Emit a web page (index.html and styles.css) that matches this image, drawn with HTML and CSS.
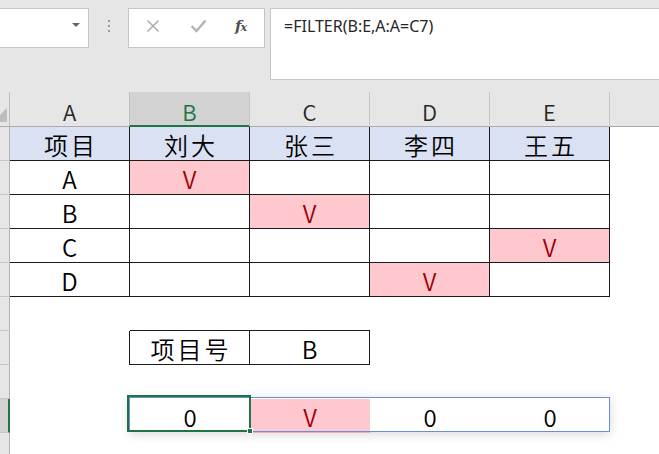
FILE: index.html
```html
<!DOCTYPE html>
<html>
<head>
<meta charset="utf-8">
<link rel="stylesheet" href="styles.css">
</head>
<body>
<div class="app">
  <div class="topbar">
    <div class="namebox"><span class="caret"></span></div>
    <div class="grip"><i></i><i></i><i></i></div>
    <div class="fxbtns">
      <svg class="ico-x" width="14" height="14" viewBox="0 0 14 14"><path d="M1.5 1.5 L12.5 12.5 M12.5 1.5 L1.5 12.5" stroke="#a6a6a6" stroke-width="1.4" fill="none"/></svg>
      <svg class="ico-ok" width="17" height="14" viewBox="0 0 17 14"><path d="M1.5 7 L6.5 12 L15.5 1.5" stroke="#b3b3b3" stroke-width="2.4" fill="none"/></svg>
      <span class="fx">f<span class="fx-x">x</span></span>
    </div>
    <div class="formula">=FILTER(B:E,A:A=C7)</div>
  </div>
  <div class="sheet">
    <!-- header row -->
    <div class="corner"><span class="tri"></span></div>
    <div class="ch">A</div>
    <div class="ch sel">B</div>
    <div class="ch">C</div>
    <div class="ch">D</div>
    <div class="ch">E</div>
    <div class="ch last"></div>
    <!-- row 1 -->
    <div class="rh"></div>
    <div class="c hd zh br bb">项目</div>
    <div class="c hd zh br bb">刘大</div>
    <div class="c hd zh br bb">张三</div>
    <div class="c hd zh br bb">李四</div>
    <div class="c hd zh br bb">王五</div>
    <div class="c"></div>
    <!-- row 2 -->
    <div class="rh"></div>
    <div class="c br bb">A</div>
    <div class="c br bb bad">V</div>
    <div class="c br bb"></div>
    <div class="c br bb"></div>
    <div class="c br bb"></div>
    <div class="c"></div>
    <!-- row 3 -->
    <div class="rh"></div>
    <div class="c br bb">B</div>
    <div class="c br bb"></div>
    <div class="c br bb bad">V</div>
    <div class="c br bb"></div>
    <div class="c br bb"></div>
    <div class="c"></div>
    <!-- row 4 -->
    <div class="rh"></div>
    <div class="c br bb">C</div>
    <div class="c br bb"></div>
    <div class="c br bb"></div>
    <div class="c br bb"></div>
    <div class="c br bb bad">V</div>
    <div class="c"></div>
    <!-- row 5 -->
    <div class="rh"></div>
    <div class="c br bb">D</div>
    <div class="c br bb"></div>
    <div class="c br bb"></div>
    <div class="c br bb bad">V</div>
    <div class="c br bb"></div>
    <div class="c"></div>
    <!-- row 6 -->
    <div class="rh"></div>
    <div class="c"></div>
    <div class="c bb"></div>
    <div class="c bb"></div>
    <div class="c"></div>
    <div class="c"></div>
    <div class="c"></div>
    <!-- row 7 -->
    <div class="rh"></div>
    <div class="c br"></div>
    <div class="c zh br bb">项目号</div>
    <div class="c br bb">B</div>
    <div class="c"></div>
    <div class="c"></div>
    <div class="c"></div>
    <!-- row 8 -->
    <div class="rh"></div>
    <div class="c"></div>
    <div class="c"></div>
    <div class="c"></div>
    <div class="c"></div>
    <div class="c"></div>
    <div class="c"></div>
    <!-- row 9 -->
    <div class="rh sel"></div>
    <div class="c"></div>
    <div class="c">0</div>
    <div class="c bad">V</div>
    <div class="c">0</div>
    <div class="c">0</div>
    <div class="c"></div>
    <!-- row 10 -->
    <div class="rh"></div>
    <div class="c"></div>
    <div class="c"></div>
    <div class="c"></div>
    <div class="c"></div>
    <div class="c"></div>
    <div class="c"></div>

    <div class="spill"></div>
    <div class="selbox"><span class="handle"></span></div>
  </div>
</div>
</body>
</html>
```

FILE: styles.css
```css
* { box-sizing: border-box; }
html, body { margin: 0; padding: 0; }
body {
  width: 659px;
  height: 454px;
  overflow: hidden;
  background: #ffffff;
  font-family: "Noto Sans CJK SC", "Noto Sans", sans-serif;
  color: #000;
}
.app { width: 659px; height: 454px; overflow: hidden; }

/* ---------- formula bar ---------- */
.topbar {
  height: 92px;
  background: #e6e6e6;
  display: flex;
  align-items: flex-start;
  padding-top: 8px;
}
.namebox {
  width: 89px;
  height: 40px;
  background: #fff;
  border: 1px solid #c6c6c6;
  border-left: none;
  position: relative;
  display: flex;
  align-items: center;
  justify-content: flex-end;
  padding-right: 8px;
}
.caret {
  width: 0; height: 0;
  border-left: 4px solid transparent;
  border-right: 4px solid transparent;
  border-top: 4px solid #666;
  margin-top: -6px;
}
.grip {
  width: 39px;
  height: 40px;
  display: flex;
  flex-direction: column;
  align-items: center;
  justify-content: center;
  gap: 3px;
  padding-bottom: 4px;
}
.grip i { display: block; width: 2px; height: 2px; background: #9a9a9a; }
.fxbtns {
  width: 137px;
  height: 40px;
  background: #fff;
  border: 1px solid #c6c6c6;
  display: flex;
  align-items: center;
  padding: 0 0 4px 17px;
}
.ico-x { margin-right: 30px; }
.ico-ok { margin-right: 28px; }
.fx {
  font-family: "DejaVu Serif", "Liberation Serif", serif;
  font-style: italic;
  font-weight: bold;
  font-size: 15px;
  color: #505050;
  letter-spacing: -1px;
}
.fx-x { font-size: 11px; }
.formula {
  flex: 1;
  margin-left: 5px;
  margin-right: -4px;
  height: 72px;
  background: #fff;
  border: 1px solid #c6c6c6;
  font-family: "Noto Sans", sans-serif;
  font-size: 16px;
  color: #262626;
  padding: 7px 0 0 13px;
  line-height: 20px;
}

/* ---------- sheet ---------- */
.sheet {
  position: relative;
  display: grid;
  grid-template-columns: 10px repeat(5, 120px) 1fr;
  grid-template-rows: 35px repeat(10, 34px);
}
.corner {
  background: #e6e6e6;
  border-right: 1px solid #bdbdbd;
  border-bottom: 1px solid #ababab;
  position: relative;
  overflow: hidden;
}
.tri {
  position: absolute;
  right: 2px; bottom: 4px;
  width: 0; height: 0;
  border-left: 14px solid transparent;
  border-bottom: 14px solid #bdbdbd;
}
.ch {
  background: #e6e6e6;
  border-right: 1px solid #c6c6c6;
  border-bottom: 1px solid #ababab;
  display: flex;
  align-items: center;
  justify-content: center;
  font-size: 22px;
  font-weight: 350;
  color: #262626;
  padding-top: 3px;
}
.ch.sel {
  background: #d2d2d2;
  color: #217346;
  border-bottom: 2px solid #217346;
  border-left: 1px solid #c0c0c0;
  margin-left: -1px;
  padding-top: 4px;
}
.ch.last { border-right: none; }
.rh {
  background: #e6e6e6;
  border-right: 1px solid #b4b4b4;
  border-bottom: 1px solid #c6c6c6;
}
.rh.sel {
  background: #d2d2d2;
  border-right: 2px solid #217346;
}
.c {
  background: #fff;
  display: flex;
  align-items: center;
  justify-content: center;
  font-size: 24px;
  font-weight: 350;
  color: #000;
  padding-top: 2px;
  line-height: 1;
}
.c.zh { letter-spacing: 3px; padding-left: 3px; }
.c.hd { background: #d9e1f2; }
.c.bad { background: #ffc7ce; color: #9c0006; }
.br { border-right: 1px solid #1a1a1a; }
.bb { border-bottom: 1px solid #1a1a1a; }

.spill {
  position: absolute;
  left: 129px;
  top: 305px;
  width: 481px;
  height: 35px;
  border: 1px solid #6a8fd3;
  box-shadow: 0 2px 10px rgba(0,0,0,0.16);
  pointer-events: none;
}
.selbox {
  position: absolute;
  left: 127px;
  top: 303px;
  width: 124px;
  height: 37px;
  border: 2px solid #217346;
}
.handle {
  position: absolute;
  right: -4px;
  bottom: -4px;
  width: 6px;
  height: 6px;
  background: #217346;
  border: 1px solid #fff;
}
```
